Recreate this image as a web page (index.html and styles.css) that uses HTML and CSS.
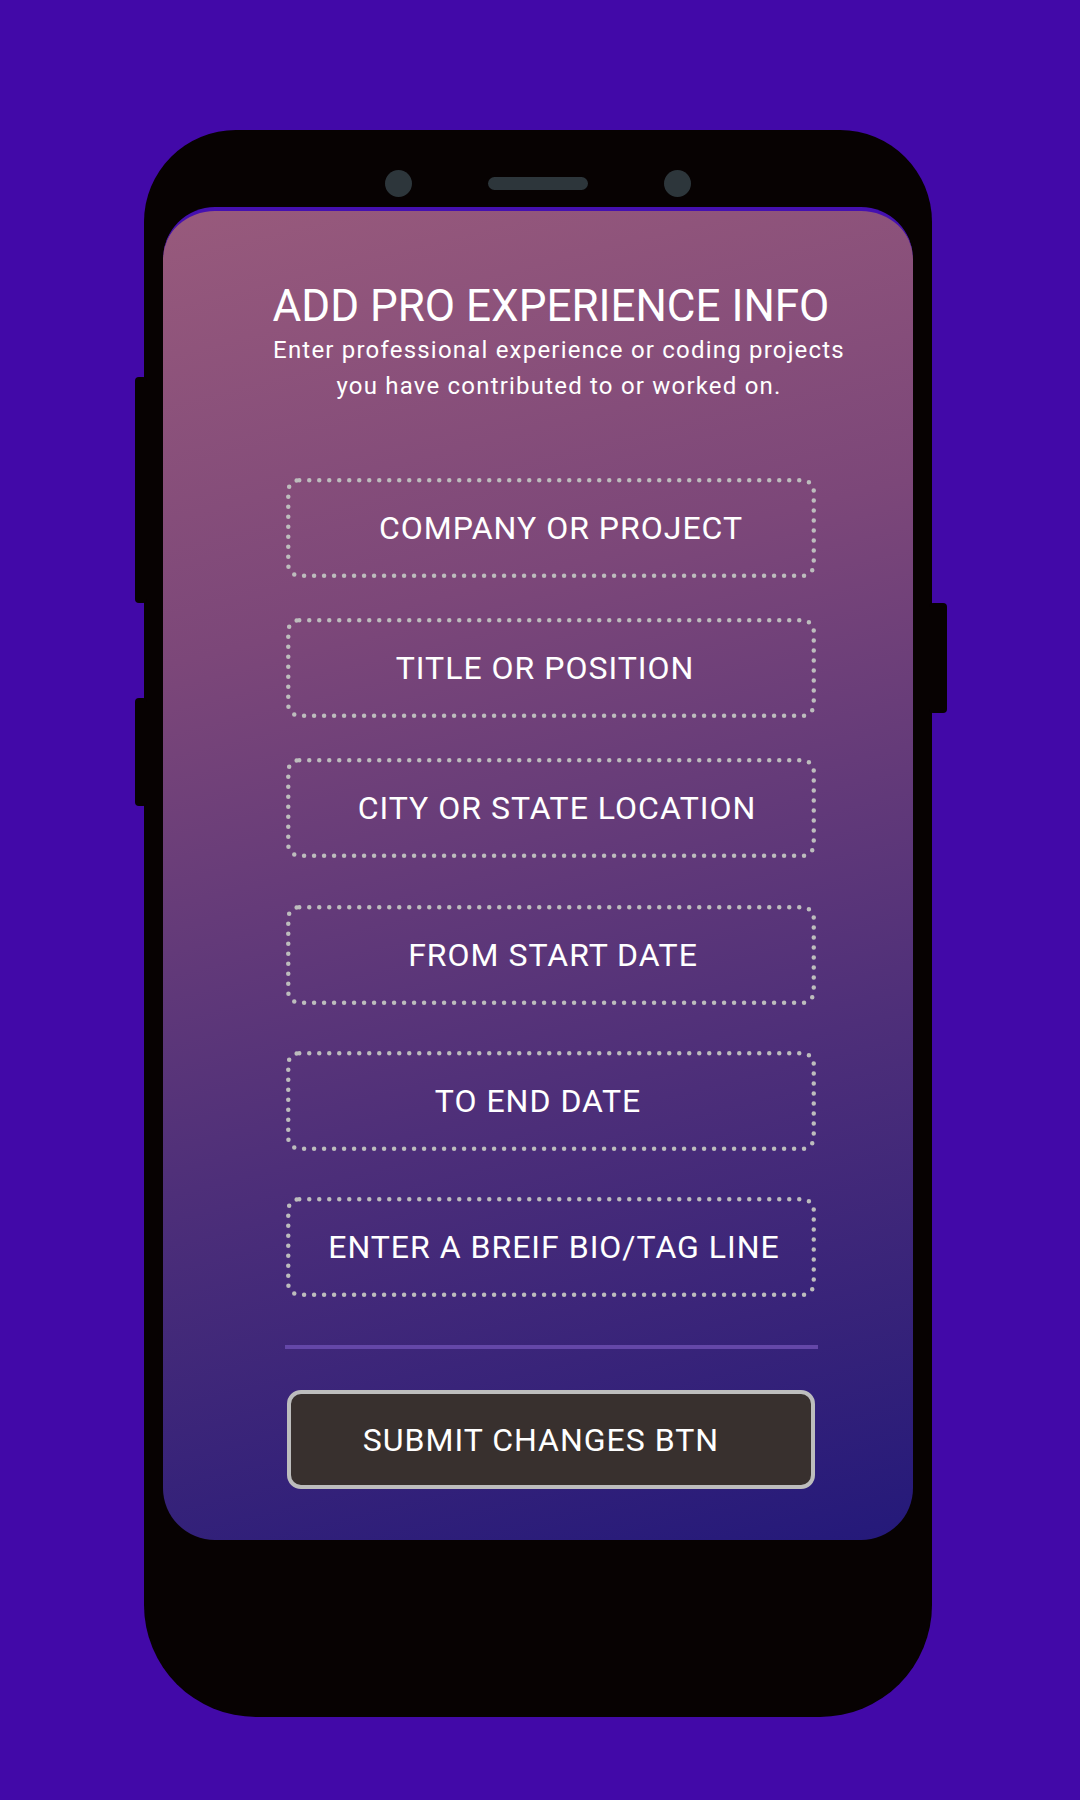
FILE: index.html
```html
<!DOCTYPE html>
<html lang="en">
<head>
<meta charset="utf-8">
<title>Add Pro Experience Info</title>
<link rel="stylesheet" href="styles.css">
</head>
<body>
<div class="phone">
  <span class="side-btn side-btn--l1"></span>
  <span class="side-btn side-btn--l2"></span>
  <span class="side-btn side-btn--r1"></span>
  <div class="notch">
    <span class="cam"></span>
    <span class="speaker"></span>
    <span class="cam"></span>
  </div>
  <div class="screen">
    <header class="head">
      <h1 class="title">ADD PRO EXPERIENCE INFO</h1>
      <p class="subtitle">Enter professional experience or coding projects<br>you have contributed to or worked on.</p>
    </header>
    <div class="fields">
      <div class="group group--a">
        <div class="field field--o1">COMPANY OR PROJECT</div>
        <div class="field field--o2">TITLE OR POSITION</div>
        <div class="field field--o3">CITY OR STATE LOCATION</div>
      </div>
      <div class="group group--b">
        <div class="field field--o4">FROM START DATE</div>
        <div class="field field--o5">TO END DATE</div>
        <div class="field field--o6">ENTER A BREIF BIO/TAG LINE</div>
      </div>
    </div>
    <div class="divider"></div>
    <button class="submit">SUBMIT CHANGES BTN</button>
  </div>
</div>
</body>
</html>
```
FILE: styles.css
```css
html, body {
  margin: 0;
  padding: 0;
}
body {
  background: #4209a8;
  width: 1080px;
  height: 1800px;
  font-family: Roboto, "Noto Sans", "Liberation Sans", sans-serif;
  overflow: hidden;
}
.phone {
  position: relative;
  box-sizing: border-box;
  margin: 130px 0 0 144px;
  width: 788px;
  height: 1587px;
  background: #070202;
  border-radius: 92px 92px 112px 112px;
  padding: 40px 19px 0;
  display: flex;
  flex-direction: column;
}
.side-btn {
  position: absolute;
  background: #070202;
  border-radius: 4px;
}
.side-btn--l1 { left: -9px; width: 12px; top: 247px; height: 226px; }
.side-btn--l2 { left: -9px; width: 12px; top: 568px; height: 108px; }
.side-btn--r1 { right: -15px; width: 18px; top: 473px; height: 110px; }

.notch {
  height: 27px;
  margin-bottom: 10px;
  display: flex;
  justify-content: center;
  align-items: center;
  gap: 76px;
}
.cam {
  width: 27px;
  height: 27px;
  border-radius: 50%;
  background: #2d363b;
}
.speaker {
  width: 100px;
  height: 13px;
  border-radius: 7px;
  background: #2d363b;
}
.screen {
  box-sizing: border-box;
  height: 1333px;
  border-top: 4px solid #4510b0;
  border-radius: 52px;
  background: linear-gradient(166deg, #985a7c 0%, #7c4779 30%, #4e2f79 65%, #24197a 100%);
  padding: 69px 97px 0 123px;
  display: flex;
  flex-direction: column;
}
.head {
  display: flex;
  flex-direction: column;
  align-items: center;
  color: #ffffff;
}
.title {
  margin: 0;
  font-size: 44px;
  line-height: 52px;
  font-weight: 400;
  letter-spacing: 0;
  white-space: nowrap;
}
.subtitle {
  margin: 0 0 0 16px;
  font-size: 24px;
  line-height: 36px;
  letter-spacing: 1.2px;
  text-align: center;
  white-space: nowrap;
}
.fields {
  margin-top: 74px;
  display: flex;
  flex-direction: column;
  gap: 47px;
}
.group {
  display: flex;
  flex-direction: column;
}
.group--a { gap: 40px; }
.group--b { gap: 46px; }
.field {
  box-sizing: border-box;
  height: 100px;
  display: flex;
  align-items: center;
  justify-content: center;
  color: #ffffff;
  font-size: 32px;
  letter-spacing: 1px;
  white-space: nowrap;
  background-image: url("data:image/svg+xml,%3Csvg xmlns='http://www.w3.org/2000/svg' width='530' height='100' viewBox='0 0 530 100'%3E%3Crect x='2.25' y='2.25' width='525.5' height='95.5' rx='11' fill='none' stroke='%23bdbdbd' stroke-width='4.5' stroke-linecap='round' stroke-dasharray='0 10'/%3E%3C/svg%3E");
  background-size: 100% 100%;
  background-repeat: no-repeat;
}
.field--o1 { padding-left: 20px; }
.field--o2 { padding-right: 12px; }
.field--o3 { padding-left: 12px; }
.field--o4 { padding-left: 4px; }
.field--o5 { padding-right: 26px; }
.field--o6 { padding-left: 6px; }

.divider {
  margin: 48px -2px 0 -1px;
  height: 4px;
  background: #6447a8;
}
.submit {
  margin: 41px 1px 0;
  box-sizing: border-box;
  height: 99px;
  background: #38302e;
  border: 4.5px solid #bdbdbd;
  border-radius: 14px;
  color: #ffffff;
  font-family: Roboto, "Noto Sans", "Liberation Sans", sans-serif;
  font-size: 32px;
  letter-spacing: 1px;
  padding: 0 20px 0 0;
}
```
